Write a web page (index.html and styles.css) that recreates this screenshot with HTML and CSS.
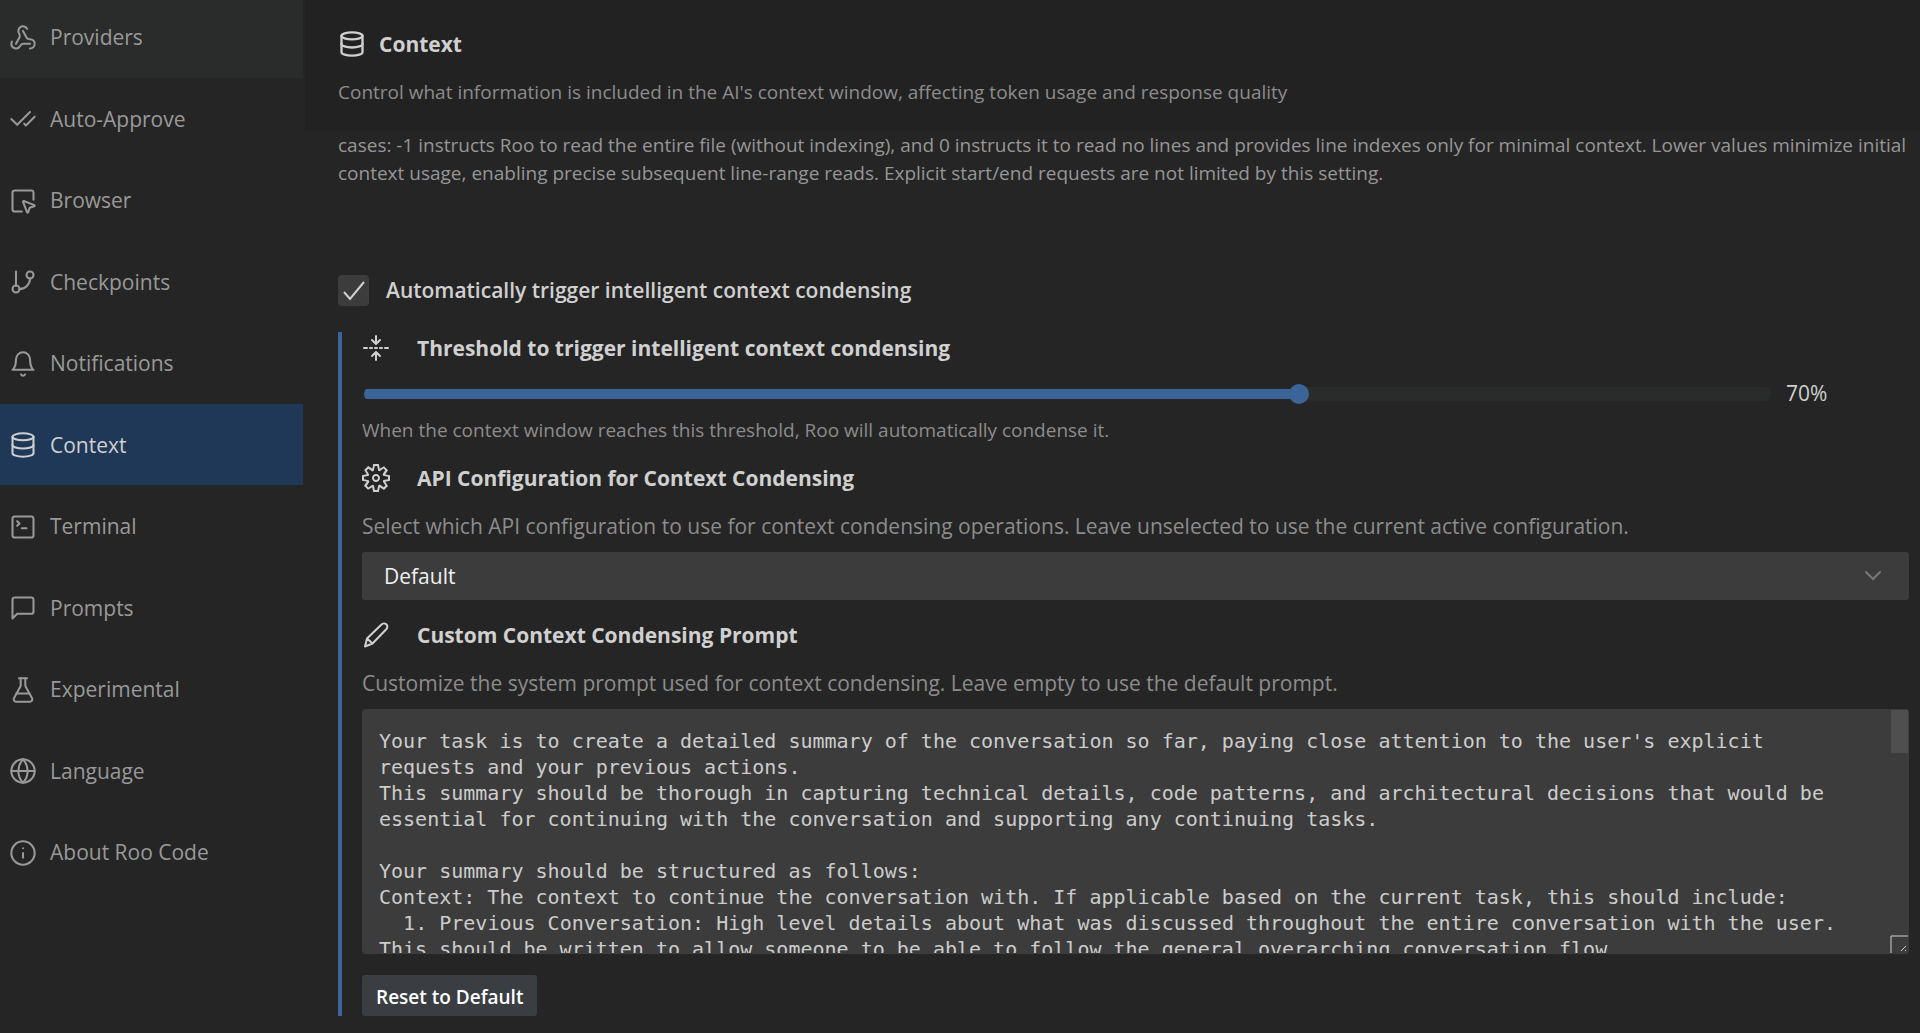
FILE: index.html
```html
<!DOCTYPE html>
<html lang="en">
<head>
  <meta charset="UTF-8" />
  <meta name="viewport" content="width=device-width, initial-scale=1" />
  <title>Roo Code - Settings</title>
  <link rel="stylesheet" href="styles.css">
</head>
<body>
<nav class="sidebar">
  <a href="#providers" class="tab hovered">
    <svg class="icon" viewBox="0 0 24 24"><path d="M18 16.98h-5.99c-1.1 0-1.95.94-2.48 1.9A4 4 0 0 1 2 17c.01-.7.2-1.4.57-2"/><path d="m6 17 3.13-5.78c.53-.97.1-2.18-.5-3.1a4 4 0 1 1 6.89-4.06"/><path d="m12 6 3.13 5.73C15.66 12.7 16.9 13 18 13a4 4 0 0 1 0 8"/></svg>
    <span>Providers</span>
  </a>
  <a href="#auto-approve" class="tab">
    <svg class="icon" viewBox="0 0 24 24"><path d="M18 6 7 17l-5-5"/><path d="m22 10-7.5 7.5L13 16"/></svg>
    <span>Auto-Approve</span>
  </a>
  <a href="#browser" class="tab">
    <svg class="icon" viewBox="0 0 24 24"><path d="M12.034 12.681a.498.498 0 0 1 .647-.647l9 3.5a.5.5 0 0 1-.033.943l-3.444 1.068a1 1 0 0 0-.66.66l-1.067 3.443a.5.5 0 0 1-.943.033z"/><path d="M21 11V5a2 2 0 0 0-2-2H5a2 2 0 0 0-2 2v14a2 2 0 0 0 2 2h6"/></svg>
    <span>Browser</span>
  </a>
  <a href="#checkpoints" class="tab">
    <svg class="icon" viewBox="0 0 24 24"><path d="M6 3v12"/><circle cx="18" cy="6" r="3"/><circle cx="6" cy="18" r="3"/><path d="M18 9a9 9 0 0 1-9 9"/></svg>
    <span>Checkpoints</span>
  </a>
  <a href="#notifications" class="tab">
    <svg class="icon" viewBox="0 0 24 24"><path d="M6 8a6 6 0 0 1 12 0c0 7 3 9 3 9H3s3-2 3-9"/><path d="M10.3 21a1.94 1.94 0 0 0 3.4 0"/></svg>
    <span>Notifications</span>
  </a>
  <a href="#context" class="tab active">
    <svg class="icon" viewBox="0 0 24 24"><ellipse cx="12" cy="5" rx="9" ry="3"/><path d="M3 5v14a9 3 0 0 0 18 0V5"/><path d="M3 12a9 3 0 0 0 18 0"/></svg>
    <span>Context</span>
  </a>
  <a href="#terminal" class="tab">
    <svg class="icon" viewBox="0 0 24 24"><path d="m7 11 2-2-2-2"/><path d="M11 13h4"/><rect width="18" height="18" x="3" y="3" rx="2"/></svg>
    <span>Terminal</span>
  </a>
  <a href="#prompts" class="tab">
    <svg class="icon" viewBox="0 0 24 24"><path d="M21 15a2 2 0 0 1-2 2H7l-4 4V5a2 2 0 0 1 2-2h14a2 2 0 0 1 2 2z"/></svg>
    <span>Prompts</span>
  </a>
  <a href="#experimental" class="tab">
    <svg class="icon" viewBox="0 0 24 24"><path d="M14 2v6a2 2 0 0 0 .245.96l5.51 10.08A2 2 0 0 1 18 22H6a2 2 0 0 1-1.755-2.96l5.51-10.08A2 2 0 0 0 10 8V2"/><path d="M6.453 15h11.094"/><path d="M8.5 2h7"/></svg>
    <span>Experimental</span>
  </a>
  <a href="#language" class="tab">
    <svg class="icon" viewBox="0 0 24 24"><circle cx="12" cy="12" r="10"/><path d="M12 2a14.5 14.5 0 0 0 0 20 14.5 14.5 0 0 0 0-20"/><path d="M2 12h20"/></svg>
    <span>Language</span>
  </a>
  <a href="#about" class="tab">
    <svg class="icon" viewBox="0 0 24 24"><circle cx="12" cy="12" r="10"/><path d="M12 16v-4"/><path d="M12 8h.01"/></svg>
    <span>About Roo Code</span>
  </a>
</nav>

<main>
  <header>
    <h1>
      <svg class="icon" viewBox="0 0 24 24"><ellipse cx="12" cy="5" rx="9" ry="3"/><path d="M3 5v14a9 3 0 0 0 18 0V5"/><path d="M3 12a9 3 0 0 0 18 0"/></svg>
      Context
    </h1>
    <p class="small">Control what information is included in the AI's context window, affecting token usage and response quality</p>
  </header>

  <div class="content">
    <p class="small read-note">cases: -1 instructs Roo to read the entire file (without indexing), and 0 instructs it to read no lines and provides line indexes only for minimal context. Lower values minimize initial context usage, enabling precise subsequent line-range reads. Explicit start/end requests are not limited by this setting.</p>

    <label class="check">
      <input type="checkbox" checked>
      <svg class="tick" viewBox="0 0 31 31"><path d="M6 17l6 7L26 7"/></svg>
      <span>Automatically trigger intelligent context condensing</span>
    </label>

    <section class="condense">
      <h2>
        <svg class="icon" viewBox="0 0 28 28"><path d="M14 2v7M10 6l4 4 4-4M14 26v-7M10 22l4-4 4 4M2 14h3M8 14h2M13 14h2M18 14h2M23 14h3"/></svg>
        <label for="threshold">Threshold to trigger intelligent context condensing</label>
      </h2>
      <div class="slider-row">
        <input type="range" id="threshold" min="10" max="100" value="70">
        <output for="threshold" id="threshold-value">70%</output>
      </div>
      <p class="small">When the context window reaches this threshold, Roo will automatically condense it.</p>

      <h2>
        <svg class="icon solid" viewBox="1 1 14 14"><path d="M9.1 4.4L8.6 2H7.4l-.5 2.4-.7.3-2-1.3-.9.8 1.3 2-.2.7-2.4.5v1.2l2.4.5.3.8-1.3 2 .8.8 2-1.3.8.3.4 2.3h1.2l.5-2.4.8-.3 2 1.3.8-.8-1.3-2 .3-.8 2.3-.4V7.4l-2.4-.5-.3-.8 1.3-2-.8-.8-2 1.3-.7-.2zM9.4 1l.5 2.4L12 2.1l2 2-1.4 2.1 2.4.4v2.8l-2.4.5L14 12l-2 2-2.1-1.4-.5 2.4H6.6l-.5-2.4L4 13.9l-2-2 1.4-2.1L1 9.4V6.6l2.4-.5L2.1 4l2-2 2.1 1.4.4-2.4h2.8zm.6 7c0 1.1-.9 2-2 2s-2-.9-2-2 .9-2 2-2 2 .9 2 2zM8 9c.6 0 1-.4 1-1s-.4-1-1-1-1 .4-1 1 .4 1 1 1z"/></svg>
        <label for="api-config">API Configuration for Context Condensing</label>
      </h2>
      <p class="hint">Select which API configuration to use for context condensing operations. Leave unselected to use the current active configuration.</p>
      <div class="select-wrap">
        <select id="api-config">
          <option>Default</option>
        </select>
        <svg class="chevron" viewBox="0 0 18 18"><path d="M2 5l7 7 7-7"/></svg>
      </div>

      <h2>
        <svg class="icon" viewBox="0 0 28 28"><path d="M3 25.500l2-8L19.500 3.500a3.200 3.200 0 0 1 5 4.500L10.500 22.500zM5 17.500l5.500 5"/></svg>
        <label for="prompt">Custom Context Condensing Prompt</label>
      </h2>
      <p class="hint">Customize the system prompt used for context condensing. Leave empty to use the default prompt.</p>
      <div class="prompt-wrap">
        <textarea id="prompt" spellcheck="false">
Your task is to create a detailed summary of the conversation so far, paying close attention to the user's explicit requests and your previous actions.
This summary should be thorough in capturing technical details, code patterns, and architectural decisions that would be essential for continuing with the conversation and supporting any continuing tasks.

Your summary should be structured as follows:
Context: The context to continue the conversation with. If applicable based on the current task, this should include:
  1. Previous Conversation: High level details about what was discussed throughout the entire conversation with the user. This should be written to allow someone to be able to follow the general overarching conversation flow.</textarea>
        <span class="scroll-thumb"></span>
        <svg class="grip" viewBox="0 0 18 18"><path d="M1 18V1h17"/><path d="M11 16l5-5M15 16l1-1"/></svg>
      </div>
      <button class="reset-btn" type="button">Reset to Default</button>
    </section>
  </div>
</main>
</body>
</html>
```
FILE: styles.css
```css
* { margin: 0; padding: 0; box-sizing: border-box; }
body {
  display: flex; height: 100vh; overflow: hidden; background: #252525; color: #d0d0d0;
  font-family: 'Segoe UI', 'Open Sans', 'Noto Sans', sans-serif; font-size: 21px; line-height: 1.5;
}
input, select, textarea, button { font: inherit; color: inherit; border: none; outline: none; }

.icon { width: 28px; height: 28px; flex: none; fill: none; stroke: currentColor; stroke-width: 2; stroke-linecap: round; stroke-linejoin: round; }
.icon.solid { fill: currentColor; stroke: none; }

/* sidebar */
.sidebar { flex: none; width: 303px; margin: -4px 2px 0 0; }
.tab { display: flex; align-items: center; gap: 13px; padding: 26px 9px 24px; color: #999; text-decoration: none; }
.tab .icon { stroke-width: 1.75; }
.tab.hovered { background: #2a2c2b; }
.tab.active { background: #1f3857; color: #d0d0d0; }

/* main column */
main { flex: 1; min-width: 0; }
header { padding: 28px 33px 25px; background: #222; }
h1, h2 { display: flex; align-items: center; font-size: 21px; line-height: 32px; font-weight: 700; }
h1 { gap: 13px; margin-bottom: 18px; }
h2 { gap: 27px; }
.small { font-size: 19px; line-height: 28px; color: #8c8c8c; }
.hint { color: #8c8c8c; line-height: 32px; }

.content { padding: 0 11px 0 33px; }
.read-note { margin-bottom: 88px; color: #969696; }

.check { display: flex; align-items: center; gap: 17px; position: relative; width: fit-content; font-weight: 600; }
.check input { appearance: none; width: 31px; height: 31px; background: #3c3c3c; border-radius: 4px; }
.tick { position: absolute; left: 0; top: 0; width: 31px; height: 31px; fill: none; stroke: #d0d0d0; stroke-width: 2; pointer-events: none; visibility: hidden; }
.check input:checked + .tick { visibility: visible; }

.condense { margin-top: 25px; padding-left: 20px; border-left: 4px solid #3b6599; }
.slider-row { display: flex; align-items: center; gap: 15px; height: 32px; margin: 14px 0 6px 2px; }
.slider-row output { width: 123px; }
.slider-row input {
  appearance: none; flex: 1; height: 14px; border-radius: 7px;
  background: linear-gradient(#3b6599, #3b6599) left center / 66% 10px no-repeat,
    linear-gradient(#2a2c2b, #2a2c2b) right center / 34% 14px no-repeat;
}
.slider-row input::-webkit-slider-thumb { appearance: none; width: 20px; height: 20px; border-radius: 50%; background: #3b6599; }
.condense .small { margin-bottom: 18px; }
.condense .hint { margin: 16px 0 10px; }

.select-wrap { position: relative; margin-bottom: 19px; }
select { appearance: none; display: block; width: 100%; height: 48px; padding: 2px 22px 0; background: #3c3c3c; color: #f0f0f0; border-radius: 3px; }
.chevron { position: absolute; right: 27px; top: 15px; width: 18px; height: 18px; fill: none; stroke: #777; stroke-width: 2; stroke-linecap: round; pointer-events: none; }

.prompt-wrap { position: relative; }
textarea {
  display: block; width: 100%; height: 245px; padding: 18px 48px 16px 16px; background: #3c3c3c;
  border: 1px solid #3c3c3c; border-radius: 3px; resize: none; color: #ccc;
  font-family: Consolas, 'DejaVu Sans Mono', monospace; font-size: 20px; line-height: 26px;
}
textarea::-webkit-scrollbar { display: none; }
.scroll-thumb { position: absolute; top: 1px; right: 1px; width: 17px; height: 43px; background: #4f4f4f; }
.grip { position: absolute; right: 1px; bottom: 1px; width: 18px; height: 18px; background: #3c3c3c; fill: none; stroke: #d0d0d0; }

.reset-btn { display: block; height: 41px; margin-top: 21px; padding: 4px 14px 0; background: #3a3d41; color: #fff; border-radius: 3px; font-size: 19px; font-weight: 600; }
```
